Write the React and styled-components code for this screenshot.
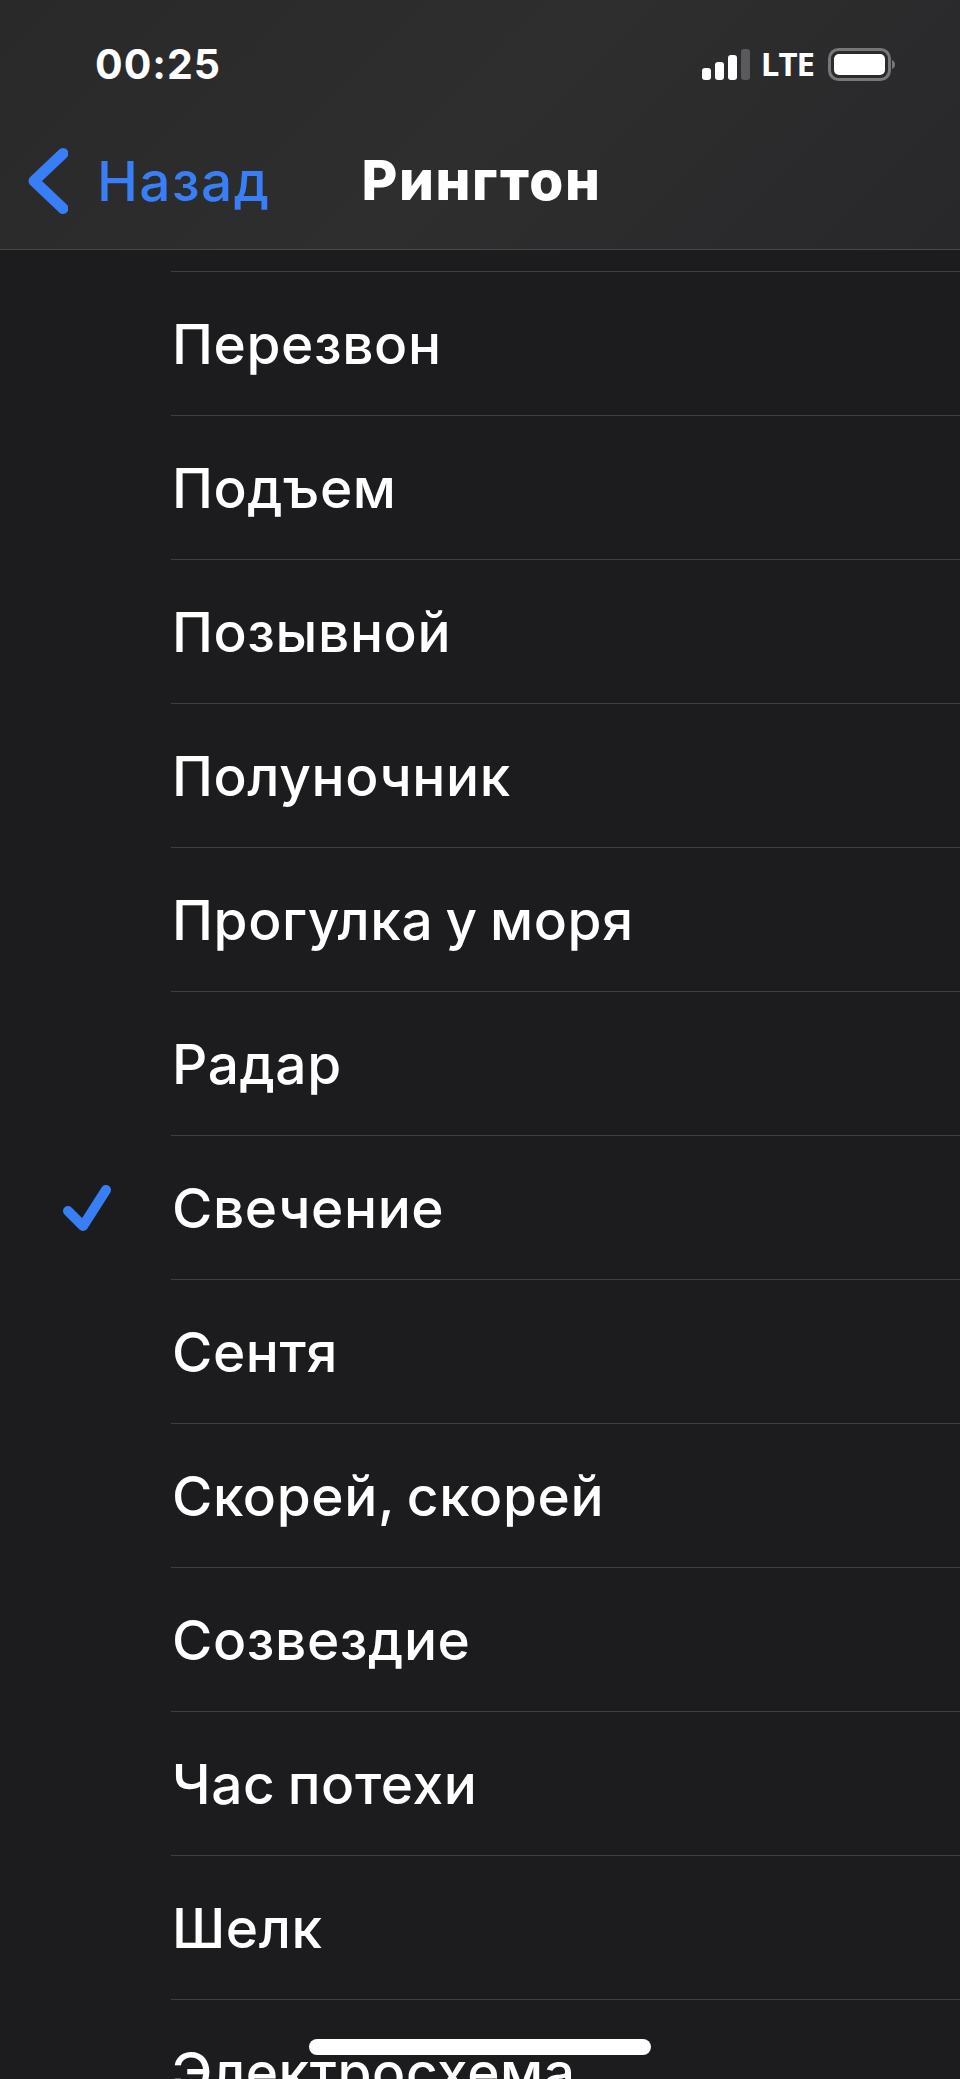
import React from 'react';
import styled, { createGlobalStyle } from 'styled-components';

const GlobalStyle = createGlobalStyle`
    html, body {
        margin: 0;
        padding: 0;
        background: #1c1c1e;
    }
    * {
        box-sizing: border-box;
    }
`;

const Screen = styled.div`
    position: relative;
    width: 960px;
    height: 2079px;
    overflow: hidden;
    background: #1c1c1e;
    color: #fff;
    font-family: Inter, "Liberation Sans", sans-serif;
`;

const Header = styled.header`
    height: 250px;
    background: linear-gradient(135deg, #29292a 0%, #2e2e2f 50%, #28282a 100%);
    border-bottom: 1px solid #48484a;
`;

const StatusBar = styled.div`
    height: 130px;
    padding: 40px 65px 0 95px;
    display: flex;
    justify-content: space-between;
    align-items: flex-start;
`;

const Time = styled.div`
    font-size: 41px;
    font-weight: 700;
    line-height: 48px;
    letter-spacing: 1px;
`;

const StatusIcons = styled.div`
    display: flex;
    align-items: center;
    gap: 11px;
    height: 48px;
`;

const Lte = styled.span`
    margin-right: 3px;
    font-family: "Open Sans", sans-serif;
    font-size: 33px;
    font-weight: 700;
    line-height: 48px;
    letter-spacing: -1px;
`;

const NavBar = styled.nav`
    position: relative;
    height: 100px;
    display: flex;
    align-items: center;
    justify-content: center;
`;

const BackLink = styled.a`
    position: absolute;
    left: 26px;
    top: 17px;
    display: flex;
    align-items: center;
    gap: 29px;
    color: #387ef6;
    font-size: 55px;
    font-weight: 500;
    line-height: 68px;
    letter-spacing: 1.4px;
`;

const Title = styled.h1`
    margin: 0;
    padding-left: 3px;
    font-size: 55px;
    font-weight: 800;
    line-height: 62px;
    letter-spacing: 1.6px;
`;

const List = styled.ul`
    list-style: none;
    margin: 21px 0 0;
    padding: 0;
`;

const Row = styled.li`
    display: grid;
    grid-template-columns: 171px 1fr;
    height: 144px;
`;

const Mark = styled.div`
    display: flex;
    align-items: center;
    padding: 2px 0 0 62px;
`;

const Label = styled.div`
    display: flex;
    align-items: center;
    padding: 1px 0 0 1px;
    border-top: 1px solid #3f3f41;
    font-size: 55px;
    font-weight: 500;
    line-height: 68px;
    letter-spacing: 0.6px;
    word-spacing: -3px;
`;

const HomeIndicator = styled.div`
    position: absolute;
    left: 309px;
    top: 2039px;
    width: 342px;
    height: 16px;
    border-radius: 8px;
    background: #fff;
`;

const tones = [
    'Перезвон',
    'Подъем',
    'Позывной',
    'Полуночник',
    'Прогулка у моря',
    'Радар',
    'Свечение',
    'Сентя',
    'Скорей, скорей',
    'Созвездие',
    'Час потехи',
    'Шелк',
    'Электросхема',
];

const selected = 'Свечение';

const Signal = () => (
    <svg width="48" height="31" viewBox="0 0 48 31">
        <rect x="0" y="19" width="9" height="12" rx="3" fill="#fff" />
        <rect x="13" y="13" width="9" height="18" rx="3" fill="#fff" />
        <rect x="26" y="6" width="9" height="25" rx="3" fill="#fff" />
        <rect x="39" y="0" width="9" height="31" rx="3" fill="#5a5a5c" />
    </svg>
);

const Battery = () => (
    <svg width="67" height="33" viewBox="0 0 67 33">
        <rect x="1.500" y="1.500" width="60" height="30" rx="9" fill="none" stroke="#77777a" strokeWidth="3" />
        <rect x="6" y="6" width="51" height="21" rx="5" fill="#fff" />
        <path d="M64 12c2 1 3 2.500 3 4.500s-1 3.500-3 4.500z" fill="#77777a" />
    </svg>
);

const BackChevron = () => (
    <svg width="42" height="68" viewBox="0 0 42 68">
        <path d="M37 6.500 8 34l29 27.500" fill="none" stroke="#387ef6" strokeWidth="11" strokeLinecap="round" strokeLinejoin="round" />
    </svg>
);

const Check = () => (
    <svg width="50" height="48" viewBox="0 0 50 48">
        <path d="M6 27 21 42 44 6" fill="none" stroke="#387ef6" strokeWidth="10" strokeLinecap="round" strokeLinejoin="round" />
    </svg>
);

const App = () => (
    <Screen>
        <GlobalStyle />
        <Header>
            <StatusBar>
                <Time>00:25</Time>
                <StatusIcons>
                    <Signal />
                    <Lte>LTE</Lte>
                    <Battery />
                </StatusIcons>
            </StatusBar>
            <NavBar>
                <BackLink>
                    <BackChevron />
                    Назад
                </BackLink>
                <Title>Рингтон</Title>
            </NavBar>
        </Header>
        <List>
            {tones.map((tone) => (
                <Row key={tone}>
                    <Mark>{tone === selected && <Check />}</Mark>
                    <Label>{tone}</Label>
                </Row>
            ))}
        </List>
        <HomeIndicator />
    </Screen>
);

export default App;
